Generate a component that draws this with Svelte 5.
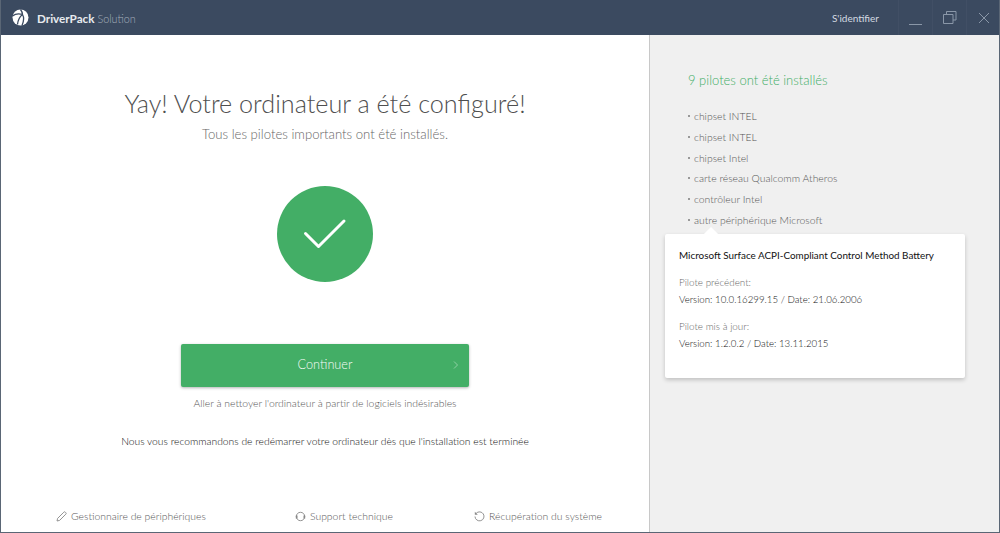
<script>
  const drivers = [
    "chipset INTEL",
    "chipset INTEL",
    "chipset Intel",
    "carte réseau Qualcomm Atheros",
    "contrôleur Intel",
    "autre périphérique Microsoft",
  ];
</script>

<div class="window">
  <header class="titlebar">
    <div class="brand">
      <svg class="logo" width="17" height="17" viewBox="0 0 17 17">
        <circle cx="8.500" cy="8.500" r="8" fill="#fff" />
        <path d="M.5 7C3 5 7 4.500 10.500 5.500C12 8 12 12 10 16.500M10.500 5.500C8 7.500 6 10 5.500 15.500M10.500 5.500C10.500 3.500 9.500 1.800 8.500 .5" stroke="#3b4a60" stroke-width="1.300" fill="none" />
      </svg>
      <span class="name"><b>DriverPack</b> <span class="sol">Solution</span></span>
    </div>
    <div class="actions">
      <span class="login">S'identifier</span>
      <button class="ctl" aria-label="Réduire">
        <svg width="14" height="14" viewBox="0 0 14 14"><path d="M0 13.500h13" stroke="#8a97a8" fill="none" /></svg>
      </button>
      <button class="ctl" aria-label="Agrandir">
        <svg width="14" height="14" viewBox="0 0 14 14"><path d="M3.500 3.500V.5h9.500v8.500h-3M.5 3.500h9.500v9H.5z" stroke="#8a97a8" fill="none" /></svg>
      </button>
      <button class="ctl" aria-label="Fermer">
        <svg width="12" height="12" viewBox="0 0 12 12"><path d="M1 1l10 10M11 1L1 11" stroke="#8a97a8" fill="none" /></svg>
      </button>
    </div>
  </header>

  <div class="body">
    <main class="main">
      <h1>Yay! Votre ordinateur a été configuré!</h1>
      <p class="sub">Tous les pilotes importants ont été installés.</p>
      <div class="check">
        <svg width="44" height="32" viewBox="0 0 44 32">
          <path d="M2.500 15.500L15.500 28.500L41 3" stroke="#fff" stroke-width="3" stroke-linecap="round" stroke-linejoin="round" fill="none" />
        </svg>
      </div>
      <button class="continue">
        Continuer
        <svg class="chev" width="6" height="8" viewBox="0 0 6 8"><path d="M1 .5L4.500 4L1 7.500" stroke="#8fd0a3" fill="none" /></svg>
      </button>
      <p class="clean">Aller à nettoyer l'ordinateur à partir de logiciels indésirables</p>
      <p class="reboot">Nous vous recommandons de redémarrer votre ordinateur dès que l'installation est terminée</p>
      <nav class="links">
        <span class="link">
          <svg width="11" height="11" viewBox="0 0 11 11"><path d="M1 10l.6-2.600L7.800 1.200a1 1 0 0 1 1.500 0l.5.5a1 1 0 0 1 0 1.500L3.600 9.400z" stroke="#888" stroke-width=".9" fill="none" /></svg>
          Gestionnaire de périphériques
        </span>
        <span class="link middle">
          <svg width="11" height="11" viewBox="0 0 11 11"><circle cx="5.500" cy="5.500" r="4.200" stroke="#888" stroke-width=".9" fill="none" /><path d="M.8 4.500h1.700v3H.8zM8.500 4.500h1.700v3H8.500z" fill="#888" /></svg>
          Support technique
        </span>
        <span class="link">
          <svg width="11" height="11" viewBox="0 0 11 11"><path d="M2.200 2.300A4.500 4.500 0 1 1 1 5.500" stroke="#888" stroke-width=".9" fill="none" /><path d="M.8 .8v3h3z" fill="#888" /></svg>
          Récupération du système
        </span>
      </nav>
    </main>

    <aside class="side">
      <h2>9 pilotes ont été installés</h2>
      <ul>
        {#each drivers as d}
          <li><span class="dot"></span>{d}</li>
        {/each}
      </ul>
      <div class="card">
        <p class="device">Microsoft Surface ACPI-Compliant Control Method Battery</p>
        <p class="label">Pilote précédent:</p>
        <p class="ver">Version: 10.0.16299.15 / Date: 21.06.2006</p>
        <p class="label second">Pilote mis à jour:</p>
        <p class="ver">Version: 1.2.0.2 / Date: 13.11.2015</p>
      </div>
    </aside>
  </div>
</div>

<style>
  :global(body) {
    margin: 0;
    font-family: "Lato", "Open Sans", sans-serif;
  }
  p, h1, h2, ul {
    margin: 0;
    padding: 0;
    font-weight: 400;
  }
  .window {
    width: 1000px;
    height: 533px;
    box-sizing: border-box;
    display: flex;
    flex-direction: column;
    background: #fff;
    border: 1px solid #5a6675;
    border-top: 0;
    overflow: hidden;
  }
  .titlebar {
    height: 35px;
    margin: 0 -1px;
    flex: none;
    display: flex;
    justify-content: space-between;
    background: #3b4a60;
  }
  .brand {
    display: flex;
    align-items: center;
    padding-left: 12px;
    gap: 8px;
  }
  .name {
    font-size: 11.700px;
    color: #a4aebb;
  }
  .name b {
    color: #e8ebef;
    font-weight: 700;
  }
  .sol {
    font-size: 10.800px;
    font-weight: 300;
  }
  .actions {
    display: flex;
    align-items: center;
  }
  .login {
    font-size: 10px;
    color: #d4dae2;
    margin-right: 19px;
  }
  .ctl {
    width: 34px;
    height: 35px;
    padding: 0;
    background: none;
    border: 0;
    border-left: 1px solid #414f65;
    display: flex;
    align-items: center;
    justify-content: center;
  }
  .body {
    flex: 1;
    display: flex;
    min-height: 0;
  }
  .main {
    width: 648px;
    flex: none;
    display: flex;
    flex-direction: column;
    align-items: center;
    box-sizing: border-box;
    padding-top: 52px;
  }
  h1 {
    font-size: 25.200px;
    font-weight: 300;
    line-height: 32px;
    color: #4f4f4f;
  }
  .sub {
    font-size: 13.150px;
    font-weight: 300;
    line-height: 18px;
    margin-top: 6px;
    color: #666;
  }
  .check {
    width: 96px;
    height: 96px;
    margin-top: 43px;
    border-radius: 50%;
    background: #43ae66;
    display: flex;
    align-items: center;
    justify-content: center;
  }
  .continue {
    position: relative;
    width: 288px;
    height: 43px;
    margin-top: 62px;
    padding: 0 0 3px;
    border: 0;
    border-radius: 2px;
    background: #43ae66;
    color: #f6fbf7;
    font: 300 12.700px "Lato", sans-serif;
    box-shadow: 0 1px 3px rgba(0, 0, 0, .3);
  }
  .chev {
    position: absolute;
    right: 10px;
    top: 17px;
  }
  .clean {
    font-size: 10.400px;
    font-weight: 300;
    line-height: 14px;
    margin-top: 9px;
    color: #555;
  }
  .reboot {
    font-size: 10.300px;
    font-weight: 300;
    line-height: 14px;
    margin-top: 24px;
    color: #111;
  }
  .links {
    margin-top: auto;
    align-self: stretch;
    display: flex;
    justify-content: space-between;
    padding: 0 47px 10px 55px;
    font-size: 10.400px;
    font-weight: 300;
    color: #555;
  }
  .link {
    display: flex;
    align-items: center;
    gap: 4px;
  }
  .middle {
    margin-left: 8px;
  }
  .side {
    flex: 1;
    background: #f0f0f0;
    border-left: 1px solid #c8c8c8;
    padding: 37px 0 0 38px;
  }
  h2 {
    font-size: 13px;
    font-weight: 300;
    line-height: 16px;
    color: #3fae66;
  }
  ul {
    list-style: none;
    margin-top: 18px;
  }
  li {
    display: flex;
    align-items: center;
    height: 20.700px;
    font-size: 10.400px;
    font-weight: 300;
    color: #555;
  }
  .dot {
    width: 2px;
    height: 2px;
    margin-right: 4px;
    background: #999;
  }
  .card {
    position: relative;
    width: 300px;
    height: 144px;
    box-sizing: border-box;
    margin: 4px 0 0 -23px;
    padding: 14px 14px;
    background: #fff;
    border-radius: 2px;
    box-shadow: 0 2px 4px rgba(0, 0, 0, .2);
    font-size: 9.900px;
    font-weight: 300;
    line-height: 14px;
    color: #111;
  }
  .card::before {
    content: "";
    position: absolute;
    top: -5px;
    left: 41px;
    width: 10px;
    height: 10px;
    background: #fff;
    transform: rotate(45deg);
  }
  .label {
    color: #666;
    font-weight: 300;
    margin-top: 13px;
  }
  .label.second {
    margin-top: 13px;
  }
  .ver {
    margin-top: 3px;
    font-size: 9.700px;
    font-weight: 300;
  }
</style>
